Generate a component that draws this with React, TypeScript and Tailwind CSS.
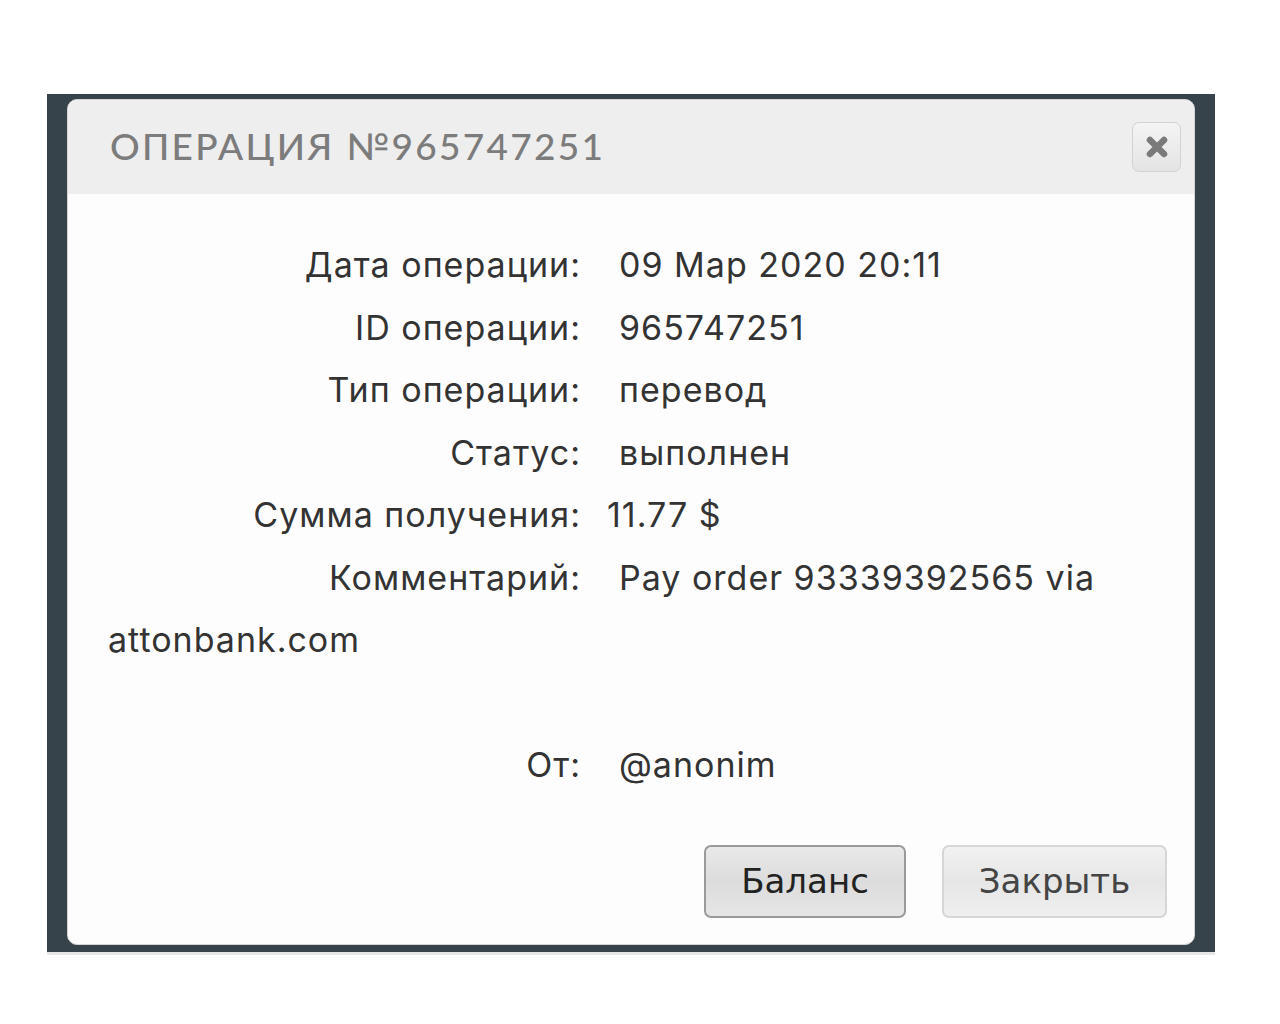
import React from "react";

const rows: { label: string; value: string; tight?: boolean }[] = [
  { label: "Дата операции:", value: "09 Мар 2020 20:11" },
  { label: "ID операции:", value: "965747251" },
  { label: "Тип операции:", value: "перевод" },
  { label: "Статус:", value: "выполнен" },
  { label: "Сумма получения:", value: "11.77 $", tight: true },
];

export default function App() {
  return (
    <div className="min-h-[1024px] w-[1280px] bg-white pt-[94px] pl-[47px]">
      <div className="w-[1168px] h-[861px] bg-[#36434b] pt-[5px] pl-[20px] border-b-[3px] border-[#e6e6e6]">
        <div className="w-[1128px] h-[846px] rounded-[10px] border border-[#d4d4d4] bg-[#fdfdfd] overflow-hidden flex flex-col">
          <div className="h-[94px] bg-[#eeeeee] flex items-center justify-between pl-[42px] pr-[13px]">
            <div
              className="text-[37px] text-[#7c7c7c] tracking-[2.3px] pb-[2px]"
              style={{ fontFamily: "Lato, 'Noto Sans', sans-serif", fontWeight: 500 }}
            >
              ОПЕРАЦИЯ №965747251
            </div>
            <button className="w-[49px] h-[50px] rounded-[7px] border border-[#d2d2d2] bg-gradient-to-b from-[#f4f4f4] to-[#e4e4e4] flex items-center justify-center">
              <svg width="26" height="26" viewBox="0 0 24 24">
                <path d="M5.5 5.5 L18.5 18.5 M18.5 5.5 L5.5 18.5" stroke="#7a7a7a" strokeWidth="6" strokeLinecap="round" />
              </svg>
            </button>
          </div>
          <div
            className="flex-1 flex flex-col pl-[40px] pr-[40px] pt-[40px] text-[34px] tracking-[1px] leading-[62.5px] text-[#333333]"
            style={{ fontFamily: "Inter, 'Noto Sans', sans-serif" }}
          >
            <div>
              {rows.map((r) => (
                <div key={r.label}>
                  <span className="inline-block w-[473px] text-right">{r.label}</span>
                  <span className={r.tight ? "ml-[26px]" : "ml-[38px]"}>{r.value}</span>
                </div>
              ))}
              <div>
                <span className="inline-block w-[473px] text-right">Комментарий:</span>
                <span className="ml-[38px]">Pay order 93339392565 via</span>{" "}
                <span>attonbank.com</span>
              </div>
            </div>
            <div className="mt-[62.5px]">
              <span className="inline-block w-[473px] text-right">От:</span>
              <span className="ml-[38px]">@anonim</span>
            </div>
            <div className="mt-auto mb-[26px] mr-[-13px] flex justify-end gap-[36px] tracking-normal" style={{ fontFamily: "'DejaVu Sans', sans-serif" }}>
              <button className="w-[202px] h-[73px] rounded-[7px] border-2 border-[#9a9a9a] bg-gradient-to-b from-[#e9e9e9] via-[#dcdcdc] to-[#e6e6e6] text-[34px] text-[#222]">
                Баланс
              </button>
              <button className="w-[225px] h-[73px] rounded-[7px] border-2 border-[#d6d6d6] bg-gradient-to-b from-[#f2f2f2] via-[#e6e6e6] to-[#efefef] text-[34px] text-[#444]">
                Закрыть
              </button>
            </div>
          </div>
        </div>
      </div>
    </div>
  );
}
